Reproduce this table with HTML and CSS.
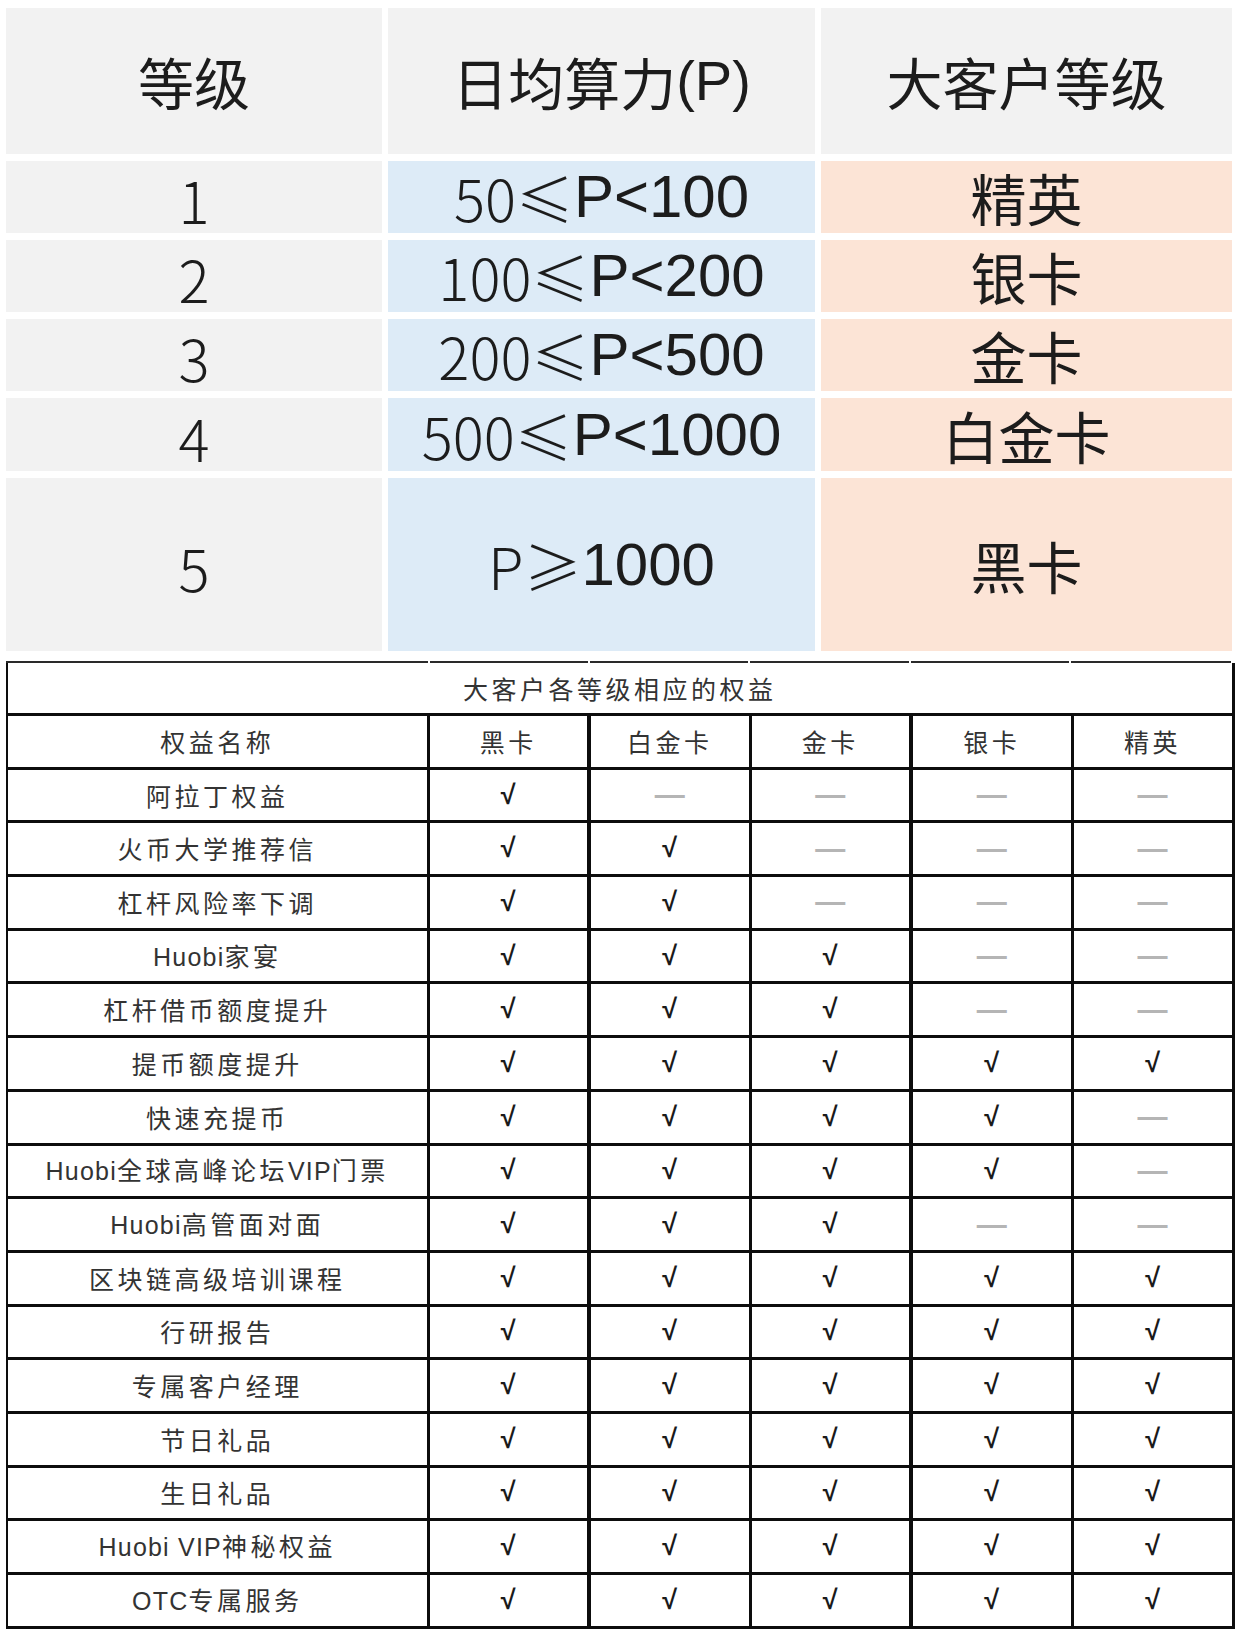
FILE: index.html
```html
<!DOCTYPE html>
<html lang="zh-CN">
<head>
<meta charset="utf-8">
<title>大客户等级</title>
<link rel="stylesheet" href="styles.css">
</head>
<body>
<div class="page">
  <div class="levels">
    <div class="cell gray head">等级</div>
    <div class="cell gray head">日均算力<span class="lat">(P)</span></div>
    <div class="cell gray head">大客户等级</div>

    <div class="cell gray num">1</div>
    <div class="cell blue range"><span class="thin">50≤</span><span class="lat">P&lt;100</span></div>
    <div class="cell peach name">精英</div>

    <div class="cell gray num">2</div>
    <div class="cell blue range"><span class="thin">100≤</span><span class="lat">P&lt;200</span></div>
    <div class="cell peach name">银卡</div>

    <div class="cell gray num">3</div>
    <div class="cell blue range"><span class="thin">200≤</span><span class="lat">P&lt;500</span></div>
    <div class="cell peach name">金卡</div>

    <div class="cell gray num">4</div>
    <div class="cell blue range"><span class="thin">500≤</span><span class="lat">P&lt;1000</span></div>
    <div class="cell peach name">白金卡</div>

    <div class="cell gray num">5</div>
    <div class="cell blue range"><span class="thin">P≥</span><span class="lat">1000</span></div>
    <div class="cell peach name">黑卡</div>
  </div>

  <div class="rights-wrap">
    <div class="top-rule">
      <span class="seg s1"></span><span class="seg s2"></span><span class="seg s3"></span><span class="seg s4"></span><span class="seg s5"></span><span class="seg s6"></span>
    </div>
    <table class="rights">
      <colgroup>
        <col class="w-name"><col class="w-lvl"><col class="w-lvl"><col class="w-lvl2"><col class="w-lvl"><col class="w-lvl2">
      </colgroup>
      <tr class="title-row"><td colspan="6" class="title">大客户各等级相应的权益</td></tr>
      <tr class="head-row">
        <td>权益名称</td><td>黑卡</td><td class="bl">白金卡</td><td>金卡</td><td class="bl">银卡</td><td>精英</td>
      </tr>
      <tr><td>阿拉丁权益</td><td class="y">√</td><td class="n bl">—</td><td class="n">—</td><td class="n bl">—</td><td class="n">—</td></tr>
      <tr><td>火币大学推荐信</td><td class="y">√</td><td class="y bl">√</td><td class="n">—</td><td class="n bl">—</td><td class="n">—</td></tr>
      <tr><td>杠杆风险率下调</td><td class="y">√</td><td class="y bl">√</td><td class="n">—</td><td class="n bl">—</td><td class="n">—</td></tr>
      <tr><td><span class="en">Huobi</span>家宴</td><td class="y">√</td><td class="y bl">√</td><td class="y">√</td><td class="n bl">—</td><td class="n">—</td></tr>
      <tr><td>杠杆借币额度提升</td><td class="y">√</td><td class="y bl">√</td><td class="y">√</td><td class="n bl">—</td><td class="n">—</td></tr>
      <tr><td>提币额度提升</td><td class="y">√</td><td class="y bl">√</td><td class="y">√</td><td class="y bl">√</td><td class="y">√</td></tr>
      <tr><td>快速充提币</td><td class="y">√</td><td class="y bl">√</td><td class="y">√</td><td class="y bl">√</td><td class="n">—</td></tr>
      <tr><td><span class="en">Huobi</span>全球高峰论坛<span class="en">VIP</span>门票</td><td class="y">√</td><td class="y bl">√</td><td class="y">√</td><td class="y bl">√</td><td class="n">—</td></tr>
      <tr><td><span class="en">Huobi</span>高管面对面</td><td class="y">√</td><td class="y bl">√</td><td class="y">√</td><td class="n bl">—</td><td class="n">—</td></tr>
      <tr><td>区块链高级培训课程</td><td class="y">√</td><td class="y bl">√</td><td class="y">√</td><td class="y bl">√</td><td class="y">√</td></tr>
      <tr><td>行研报告</td><td class="y">√</td><td class="y bl">√</td><td class="y">√</td><td class="y bl">√</td><td class="y">√</td></tr>
      <tr><td>专属客户经理</td><td class="y">√</td><td class="y bl">√</td><td class="y">√</td><td class="y bl">√</td><td class="y">√</td></tr>
      <tr><td>节日礼品</td><td class="y">√</td><td class="y bl">√</td><td class="y">√</td><td class="y bl">√</td><td class="y">√</td></tr>
      <tr><td>生日礼品</td><td class="y">√</td><td class="y bl">√</td><td class="y">√</td><td class="y bl">√</td><td class="y">√</td></tr>
      <tr><td><span class="en">Huobi VIP</span>神秘权益</td><td class="y">√</td><td class="y bl">√</td><td class="y">√</td><td class="y bl">√</td><td class="y">√</td></tr>
      <tr><td><span class="en">OTC</span>专属服务</td><td class="y">√</td><td class="y bl">√</td><td class="y">√</td><td class="y bl">√</td><td class="y">√</td></tr>
    </table>
  </div>
</div>
</body>
</html>
```
FILE: styles.css
```css
html, body {
  margin: 0;
  padding: 0;
  background: #ffffff;
}

.page {
  padding: 8px 0 0 6px;
  width: 1236px;
  box-sizing: border-box;
}

/* ---------- top level table ---------- */
.levels {
  display: grid;
  grid-template-columns: 376px 427px 411px;
  grid-template-rows: 146px 72px 72px 72px 73px 173px;
  column-gap: 6px;
  row-gap: 7px;
  font-family: "Noto Sans CJK SC", "Noto Sans", sans-serif;
  color: #1c1c1c;
}

.cell {
  display: flex;
  align-items: center;
  justify-content: center;
  white-space: nowrap;
}

.gray { background: #f2f2f2; }
.blue { background: #ddebf7; }
.peach { background: #fce4d6; }

.head {
  font-size: 56px;
  line-height: 1;
}

.num {
  font-size: 58px;
  font-weight: 300;
  line-height: 1;
  padding-top: 4px;
}

.name {
  font-size: 56px;
  line-height: 1;
}

.range {
  font-size: 58px;
  line-height: 1;
}

.thin {
  font-family: "Noto Sans CJK SC", "Noto Sans", sans-serif;
  font-weight: 300;
}

.lat {
  font-family: "Liberation Sans", Arial, sans-serif;
  font-size: 60px;
}

.head .lat {
  font-size: 56px;
}

/* ---------- rights table ---------- */
.rights-wrap {
  margin-top: 10px;
  width: 1230px;
}

.top-rule {
  display: flex;
  height: 2px;
  gap: 2px;
}

.seg {
  display: block;
  height: 2px;
  background: #2a2a2a;
}
.s1 { width: 422px; }
.s2 { width: 158px; }
.s3 { width: 158px; }
.s4 { width: 159px; }
.s5 { width: 158px; }
.s6 { width: 160px; }

.rights {
  border-collapse: collapse;
  table-layout: fixed;
  width: 1226px;
  font-family: "Noto Sans CJK SC", "Liberation Sans", sans-serif;
  font-size: 25px;
  letter-spacing: 3.5px;
  color: #333333;
}

.w-name { width: 421px; }
.w-lvl { width: 161px; }
.w-lvl2 { width: 161px; }

.rights td {
  border: 3px solid #0d0d0d;
  height: 50.7px;
  padding: 0;
  text-align: center;
  vertical-align: middle;
  white-space: nowrap;
  line-height: 1;
}

.rights .bl {
  border-left-width: 4px;
}

.rights .title-row td {
  border-top: none;
  border-left-width: 2px;
  height: 50px;
}

.rights tr td:first-child {
  border-left-width: 2px;
}

.rights .en {
  font-family: "Liberation Sans", Arial, sans-serif;
  letter-spacing: 1.2px;
}

.rights .y {
  font-family: "Liberation Sans", Arial, sans-serif;
  font-weight: bold;
  font-size: 27px;
  color: #1a1a1a;
  letter-spacing: 0;
}

.rights .n {
  font-family: "Liberation Sans", Arial, sans-serif;
  font-weight: bold;
  font-size: 30px;
  color: #b5b5b5;
  letter-spacing: 0;
}
```
